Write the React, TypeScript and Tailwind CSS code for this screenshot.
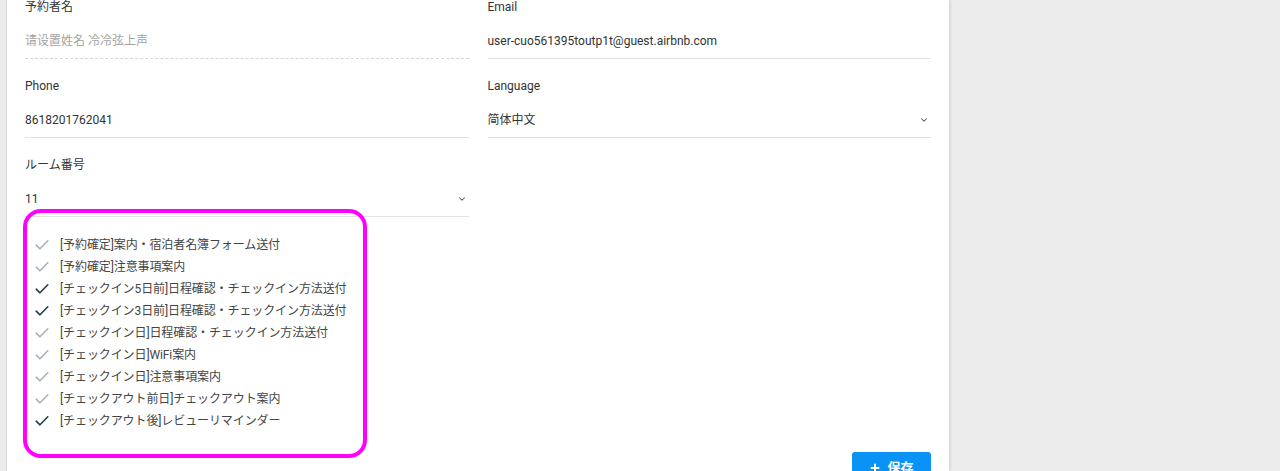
import { ChevronDown, Plus } from 'lucide-react'

const tasks = [
  { label: '[予約確定]案内・宿泊者名簿フォーム送付', done: false },
  { label: '[予約確定]注意事項案内', done: false },
  { label: '[チェックイン5日前]日程確認・チェックイン方法送付', done: true },
  { label: '[チェックイン3日前]日程確認・チェックイン方法送付', done: true },
  { label: '[チェックイン日]日程確認・チェックイン方法送付', done: false },
  { label: '[チェックイン日]WiFi案内', done: false },
  { label: '[チェックイン日]注意事項案内', done: false },
  { label: '[チェックアウト前日]チェックアウト案内', done: false },
  { label: '[チェックアウト後]レビューリマインダー', done: true },
]

function Field({
  label,
  value,
  placeholder,
  dashed,
  select,
}: {
  label: string
  value?: string
  placeholder?: string
  dashed?: boolean
  select?: boolean
}) {
  return (
    <div
      className={
        dashed
          ? 'border-b border-dashed border-[#d6d6d6] pb-[10px]'
          : 'border-b border-[#e2e2e2] pb-[10px]'
      }
    >
      <div className="h-[14px] text-[12px] leading-[14px] text-[#333]">{label}</div>
      <div className="mt-[20px] flex h-[14px] items-center justify-between text-[12px] leading-[14px]">
        {value ? (
          <span className="text-[#333]">{value}</span>
        ) : (
          <span className="text-[#a3a3a3]">{placeholder}</span>
        )}
        {select && <ChevronDown className="mr-[2px] h-[10px] w-[10px] text-[#555]" strokeWidth={2.5} />}
      </div>
    </div>
  )
}

function Check({ done }: { done: boolean }) {
  return (
    <svg width="14" height="12" viewBox="0 0 14 12" className="shrink-0">
      <path
        d="M1.2 6.2 L5 9.8 L12.8 1.8"
        fill="none"
        stroke={done ? '#1f3d4a' : '#a7b2b8'}
        strokeWidth="1.6"
        strokeLinecap="round"
        strokeLinejoin="round"
      />
    </svg>
  )
}

export default function App() {
  return (
    <div
      className="flex h-[471px] w-[1280px] overflow-hidden bg-[#ebebeb]"
      style={{ fontFamily: 'Roboto, "Noto Sans CJK JP", sans-serif' }}
    >
      <div className="w-[7px] shrink-0 border-r border-[#e0e0e0] bg-[#ebebeb]" />
      <div className="relative w-[942px] shrink-0 bg-white px-[18px] shadow-[1px_0_3px_rgba(0,0,0,0.12)]">
        <div className="grid grid-cols-2 gap-x-[19px] gap-y-[20px]">
          <Field label="予約者名" placeholder="请设置姓名 冷冷弦上声" dashed />
          <Field label="Email" value="user-cuo561395toutp1t@guest.airbnb.com" />
          <Field label="Phone" value="8618201762041" />
          <Field label="Language" value="简体中文" select />
          <Field label="ルーム番号" value="11" select />
        </div>

        <ul className="mt-[17px] flex flex-col">
          {tasks.map((t) => (
            <li key={t.label} className="flex h-[22px] items-center gap-[11px] pl-[10px]">
              <Check done={t.done} />
              <span className="text-[12px] tracking-[-0.1px] text-[#444]">{t.label}</span>
            </li>
          ))}
        </ul>

        <div className="mt-[20px] flex justify-end">
          <button className="flex h-[32px] w-[79px] items-center justify-center gap-[6px] rounded-[3px] bg-[#0a93f5] text-[13px] font-bold text-white">
            <Plus className="h-[12px] w-[12px]" strokeWidth={4} />
            保存
          </button>
        </div>

        <div className="pointer-events-none absolute left-[16px] top-[209px] h-[249px] w-[344px] rounded-[18px] border-[4px] border-[#ff00ff]" />
      </div>
      <div className="flex-1" />
    </div>
  )
}
